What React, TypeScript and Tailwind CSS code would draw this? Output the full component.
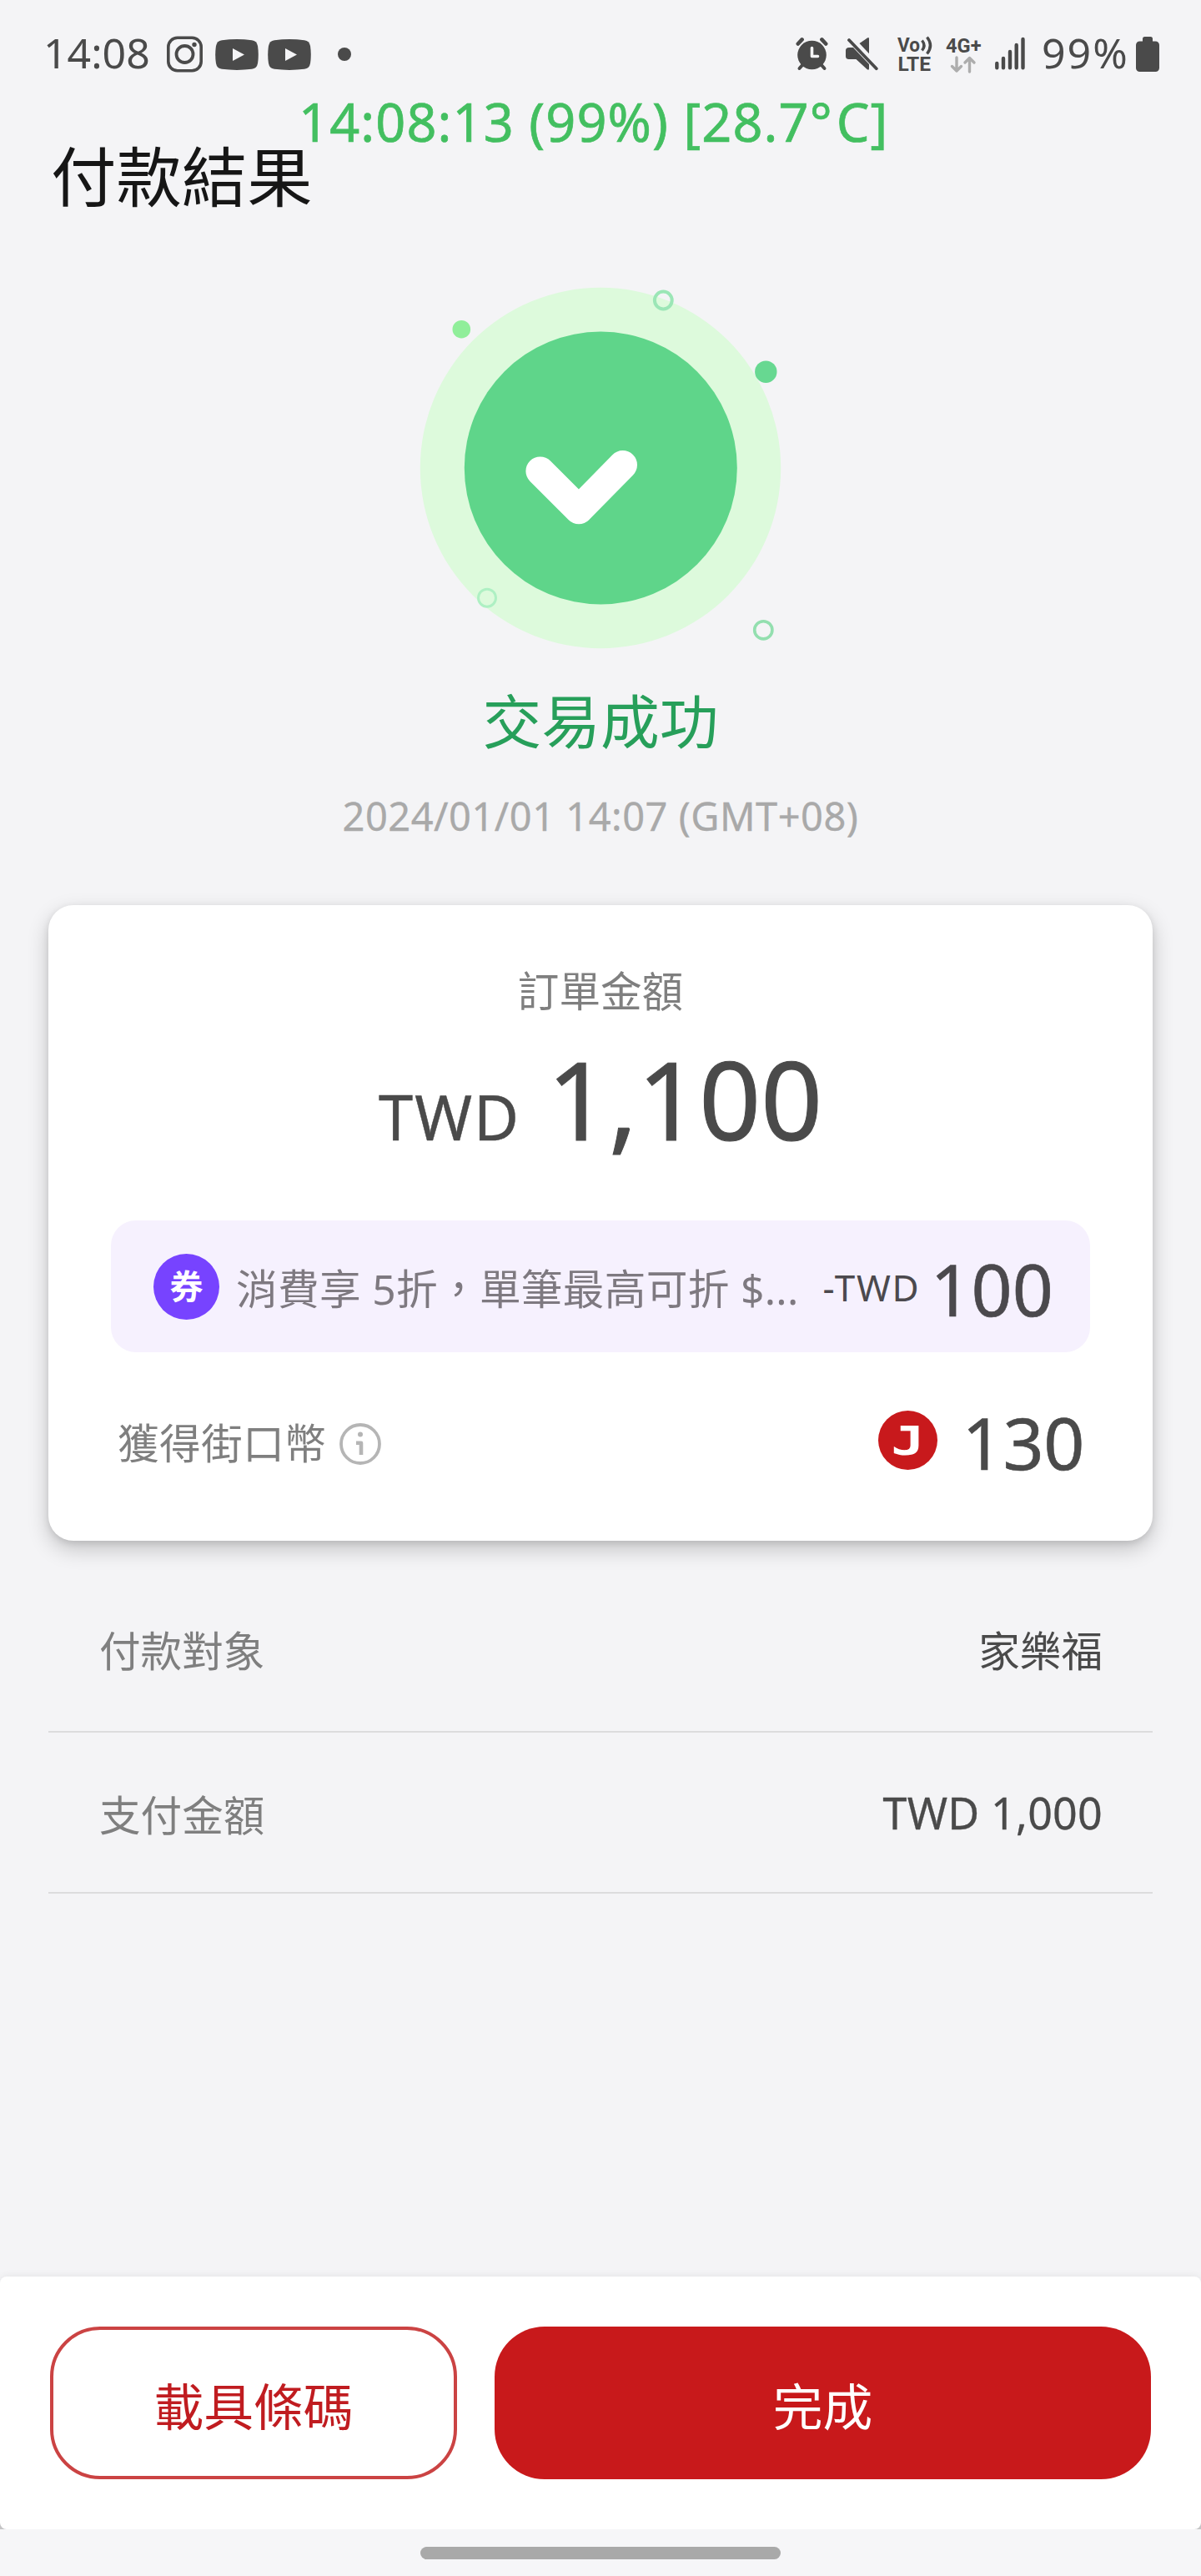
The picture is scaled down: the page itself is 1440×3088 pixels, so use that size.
import type { ReactNode } from "react";
import clsx from "clsx";

function InstagramIcon() {
  return (
    <svg width="43" height="44" viewBox="0 0 43 44" fill="none" stroke="#4a4a4a">
      <rect x="1.8" y="2.3" width="39.4" height="39.4" rx="11" strokeWidth="3.6" />
      <circle cx="21.5" cy="22" r="10" strokeWidth="3.8" />
      <circle cx="33" cy="10.5" r="2.7" fill="#4a4a4a" stroke="none" />
    </svg>
  );
}

function YoutubeIcon() {
  return (
    <svg width="52" height="37" viewBox="0 0 52 37">
      <path
        d="M8 1.2Q26-1 44 1.2Q50 2 51 8Q52.6 18.5 51 29Q50 35 44 35.8Q26 38 8 35.8Q2 35 1 29Q-.6 18.5 1 8Q2 2 8 1.2Z"
        fill="#4a4a4a"
      />
      <path d="M21 11L35 18.5L21 26Z" fill="#f4f4f6" />
    </svg>
  );
}

function AlarmIcon() {
  return (
    <svg width="40" height="44" viewBox="0 -2 40 44" fill="none" stroke="#4a4a4a" strokeLinecap="round">
      <circle cx="19.5" cy="21" r="17.3" fill="#4a4a4a" stroke="none" />
      <path d="M2.8 7.5L7.6 2.4M31.4 2.4L36.2 7.5" strokeWidth="4.6" />
      <path d="M4.5 37L8.5 32.5M34.5 37L30.5 32.5" strokeWidth="4" />
      <path d="M19.5 12.5V22.5H26.5" stroke="#f4f4f6" strokeWidth="3.6" strokeLinejoin="round" />
    </svg>
  );
}

function MutedIcon() {
  return (
    <svg width="39" height="44" viewBox="0 -2 39 44" fill="#4a4a4a">
      <path d="M16.5 7L26 .4Q28 -.6 28 1.5V19.2Z" />
      <path d="M4 12H9L28 32V37Q28 40 25.5 38L12.5 26H4Q0 26 0 22.5V15.5Q0 12 4 12Z" />
      <path d="M4 3L36.8 37.2" stroke="#4a4a4a" strokeWidth="3.8" strokeLinecap="round" />
    </svg>
  );
}

function VolteIcon() {
  return (
    <svg
      className="overflow-visible"
      width="42"
      height="44"
      viewBox="0 0 42 44"
      fill="#4a4a4a"
      fontFamily="Roboto, sans-serif"
      fontWeight="700"
    >
      <text x="0" y="18.5" fontSize="23" textLength="27" lengthAdjust="spacingAndGlyphs">
        Vo
      </text>
      <text x="0.5" y="42.3" fontSize="24.5" textLength="39.5" lengthAdjust="spacingAndGlyphs">
        LTE
      </text>
      <path d="M29.5 5.5Q34.5 11.5 29.5 17.5M35.5 1.5Q43.5 11.5 35.5 21.5" fill="none" stroke="#4a4a4a" strokeWidth="3.4" />
    </svg>
  );
}

function NetworkIcon() {
  return (
    <svg
      className="overflow-visible"
      width="42"
      height="44"
      viewBox="0 0 42 44"
      fill="#4a4a4a"
      fontFamily="Roboto, sans-serif"
      fontWeight="700"
    >
      <text x="0" y="19.5" fontSize="24" textLength="42.5" lengthAdjust="spacingAndGlyphs">
        4G+
      </text>
      <path
        d="M13 26V42M7.5 36.5L13 42L18.5 36.5M28.5 43V26.5M23 32L28.5 26.5L34 32"
        fill="none"
        stroke="#adadad"
        strokeWidth="3.4"
        strokeLinecap="round"
        strokeLinejoin="round"
      />
    </svg>
  );
}

function SignalIcon() {
  return (
    <svg width="36" height="44" viewBox="0 -1 36 44" stroke="#4a4a4a" strokeWidth="4.4" strokeLinecap="round">
      <path d="M2.3 32V37.2M10 26V37.2M18 18V37.2M25.7 10V37.2M33.5 3V37.2" />
    </svg>
  );
}

function BatteryIcon() {
  return (
    <svg width="28" height="43" viewBox="0 0 28 43" fill="#4a4a4a">
      <rect x="8" y="0" width="12" height="10" rx="2.5" />
      <rect x="0" y="5.5" width="28" height="36.5" rx="4.5" />
    </svg>
  );
}

function StatusBar() {
  return (
    <div className="flex h-[125px] shrink-0 items-center pt-[5px] pr-[50px] pl-[52px] text-[50px] leading-none text-[#4a4a4a]">
      <span className="mb-[5px] w-[148px]">14:08</span>
      <InstagramIcon />
      <div className="ml-[15px] flex gap-[11px]">
        <YoutubeIcon />
        <YoutubeIcon />
      </div>
      <div className="ml-8 size-4 rounded-full bg-[#4a4a4a]" />
      <div className="ml-auto flex items-center">
        <AlarmIcon />
        <div className="w-5" />
        <MutedIcon />
        <div className="w-[23px]" />
        <VolteIcon />
        <div className="w-4" />
        <NetworkIcon />
        <div className="w-[17px]" />
        <SignalIcon />
        <span className="mb-[5px] ml-5 w-[113px] tracking-[2px]">99%</span>
        <BatteryIcon />
      </div>
    </div>
  );
}

function SuccessIllustration() {
  return (
    <svg className="mx-auto mt-[23px] shrink-0" width="480" height="480" viewBox="0 0 480 480" fill="none">
      <circle cx="240" cy="241" r="216.2" fill="#ddfadc" />
      <circle cx="240.3" cy="241" r="163.5" fill="#5fd58a" />
      <path
        d="M167.7 244.7L214 291L266.7 237.3"
        stroke="#fff"
        strokeWidth="34.6"
        strokeLinecap="round"
        strokeLinejoin="round"
      />
      <circle cx="73.3" cy="74.7" r="10.8" fill="#90ee9a" />
      <circle cx="438.3" cy="125.7" r="13.2" fill="#67d891" />
      <circle cx="315.3" cy="40" r="10.4" stroke="#9be6b6" strokeWidth="4" />
      <circle cx="104" cy="396.7" r="10.5" stroke="#aef0c3" strokeWidth="3" />
      <circle cx="435.3" cy="435.3" r="10.6" stroke="#93dfaf" strokeWidth="3.6" />
    </svg>
  );
}

function InfoIcon() {
  return (
    <svg width="50" height="50" viewBox="0 0 50 50" fill="none" stroke="#b5b5b5">
      <circle cx="25" cy="25" r="23" strokeWidth="3.8" />
      <circle cx="25" cy="13.5" r="3" fill="#b5b5b5" stroke="none" />
      <path d="M20 23.7H26V38" strokeWidth="4.6" strokeLinejoin="round" />
    </svg>
  );
}

interface DetailRowProps {
  label: string;
  labelClassName?: string;
  children: ReactNode;
}

function DetailRow({ label, labelClassName, children }: DetailRowProps) {
  return (
    <div className="mx-[58px] flex h-[193px] shrink-0 items-center justify-between border-b-2 border-[#dcdcdd] pr-[60px] pl-[61px] leading-none">
      <span className={clsx("text-[49.6px] text-[#7f7f7f]", labelClassName)}>{label}</span>
      {children}
    </div>
  );
}

export default function App() {
  return (
    <div className="relative flex h-[3088px] w-[1440px] flex-col overflow-hidden bg-[#f4f4f6] font-['Noto_Sans','Noto_Sans_CJK_TC',sans-serif] whitespace-nowrap">
      <StatusBar />

      {/* system monitor overlay */}
      <div className="absolute top-[106px] left-[358px] text-[63px] leading-[80px] tracking-[1.1px] text-[#43bf60] [-webkit-text-stroke:0.7px_#43bf60]">
        14:08:13 (99%) [28.7<span className="tracking-[5px]">°</span>C]
      </div>

      <h1 className="h-[172px] shrink-0 pl-[61px] text-[78.4px] leading-[174px] text-[#161616]">付款結果</h1>

      <SuccessIllustration />
      <p className="h-[130px] shrink-0 text-center text-[70.8px] leading-[130px] text-[#279f5a]">交易成功</p>
      <p className="h-24 shrink-0 text-center text-[47px] leading-24 tracking-[0.5px] text-[#a9a9a9] [-webkit-text-stroke:0.3px_#a9a9a9]">
        2024/01/01 14:07 (GMT+08)
      </p>

      <section className="mx-[58px] mt-[59px] flex h-[762px] shrink-0 flex-col rounded-[30px] bg-white pt-[63px] shadow-[0_10px_26px_rgba(0,0,0,0.2),0_3px_8px_rgba(0,0,0,0.1)]">
        <p className="h-20 text-center text-[49.6px] leading-20 text-[#7f7f7f]">訂單金額</p>
        <div className="flex h-[176px] items-baseline pl-[396px] leading-[177px] text-[#4a4a4a]">
          <span className="w-[202px] text-[74px] tracking-[2px] [-webkit-text-stroke:0.5px_#4a4a4a]">TWD</span>
          <span className="text-[130px] tracking-[-0.5px] [-webkit-text-stroke:1px_#4a4a4a]">1,100</span>
        </div>

        <div className="mx-[75px] mt-[59px] flex h-[158px] items-center rounded-[30px] bg-[#f6f1fe] pr-11 pl-[51px] leading-none">
          <div className="flex size-[79px] items-center justify-center rounded-full bg-[#7743ff] text-[40px] font-bold text-white">
            券
          </div>
          <span className="mt-2 ml-5 text-[49.7px] tracking-[0.3px] text-[#7e7980]">
            消費享 5折，單筆最高可折 $...
          </span>
          <span className="mt-px ml-auto w-[129px] text-[44px] tracking-[1.8px] text-[#4b494d]">-TWD</span>
          <span className="mt-[5px] text-[86px] text-[#4b494d] [-webkit-text-stroke:0.6px_#4b494d]">100</span>
        </div>

        <div className="mt-[30px] flex h-40 items-center pr-[82px] pl-[83px] leading-none">
          <span className="text-[49.6px] tracking-[0.5px] text-[#7f7f7f]">獲得街口幣</span>
          <div className="ml-4">
            <InfoIcon />
          </div>
          <div className="mb-[9px] ml-auto flex size-[71px] items-center justify-center rounded-full bg-[#c8191c] text-white">
            <span className="scale-x-140 font-['DejaVu_Sans_Mono',monospace] text-[48px] font-bold">J</span>
          </div>
          <span className="mb-1 ml-[30px] text-[86px] tracking-[-0.4px] text-[#4a4a4a] [-webkit-text-stroke:0.6px_#4a4a4a]">
            130
          </span>
        </div>
      </section>

      <div className="h-[37px] shrink-0" />
      <DetailRow label="付款對象">
        <span className="text-[49.6px] text-[#4a4a4a]">家樂福</span>
      </DetailRow>
      <DetailRow label="支付金額" labelClassName="mt-[9px]">
        <span className="mt-px text-[52px] tracking-[0.2px] text-[#4a4a4a] [-webkit-text-stroke:0.3px_#4a4a4a]">
          TWD 1,000
        </span>
      </DetailRow>

      <footer className="mt-auto shrink-0">
        {/* lower half is darker so the rounded bottom corners read as shadow */}
        <div className="bg-linear-to-b from-[#f4f4f6] from-50% to-[#c9c9ca] to-50%">
          <div className="flex h-[303px] gap-[45px] rounded-lg bg-white px-[60px] pt-[60px] text-[59.8px] shadow-[0_0_10px_rgba(0,0,0,0.08)]">
            <button className="h-[183px] w-[488px] rounded-[60px] border-4 border-[#cb4343] pt-[10px] leading-none text-[#c01c20]">
              載具條碼
            </button>
            <button className="h-[183px] flex-1 rounded-[60px] bg-[#c8191b] pt-[10px] leading-none text-white">
              完成
            </button>
          </div>
        </div>
        <div className="relative flex h-14 justify-center bg-[#f6f6f8] pt-[21px]">
          <div className="h-[15px] w-[432px] rounded-full bg-[#a9a9a9]" />
        </div>
      </footer>
    </div>
  );
}
